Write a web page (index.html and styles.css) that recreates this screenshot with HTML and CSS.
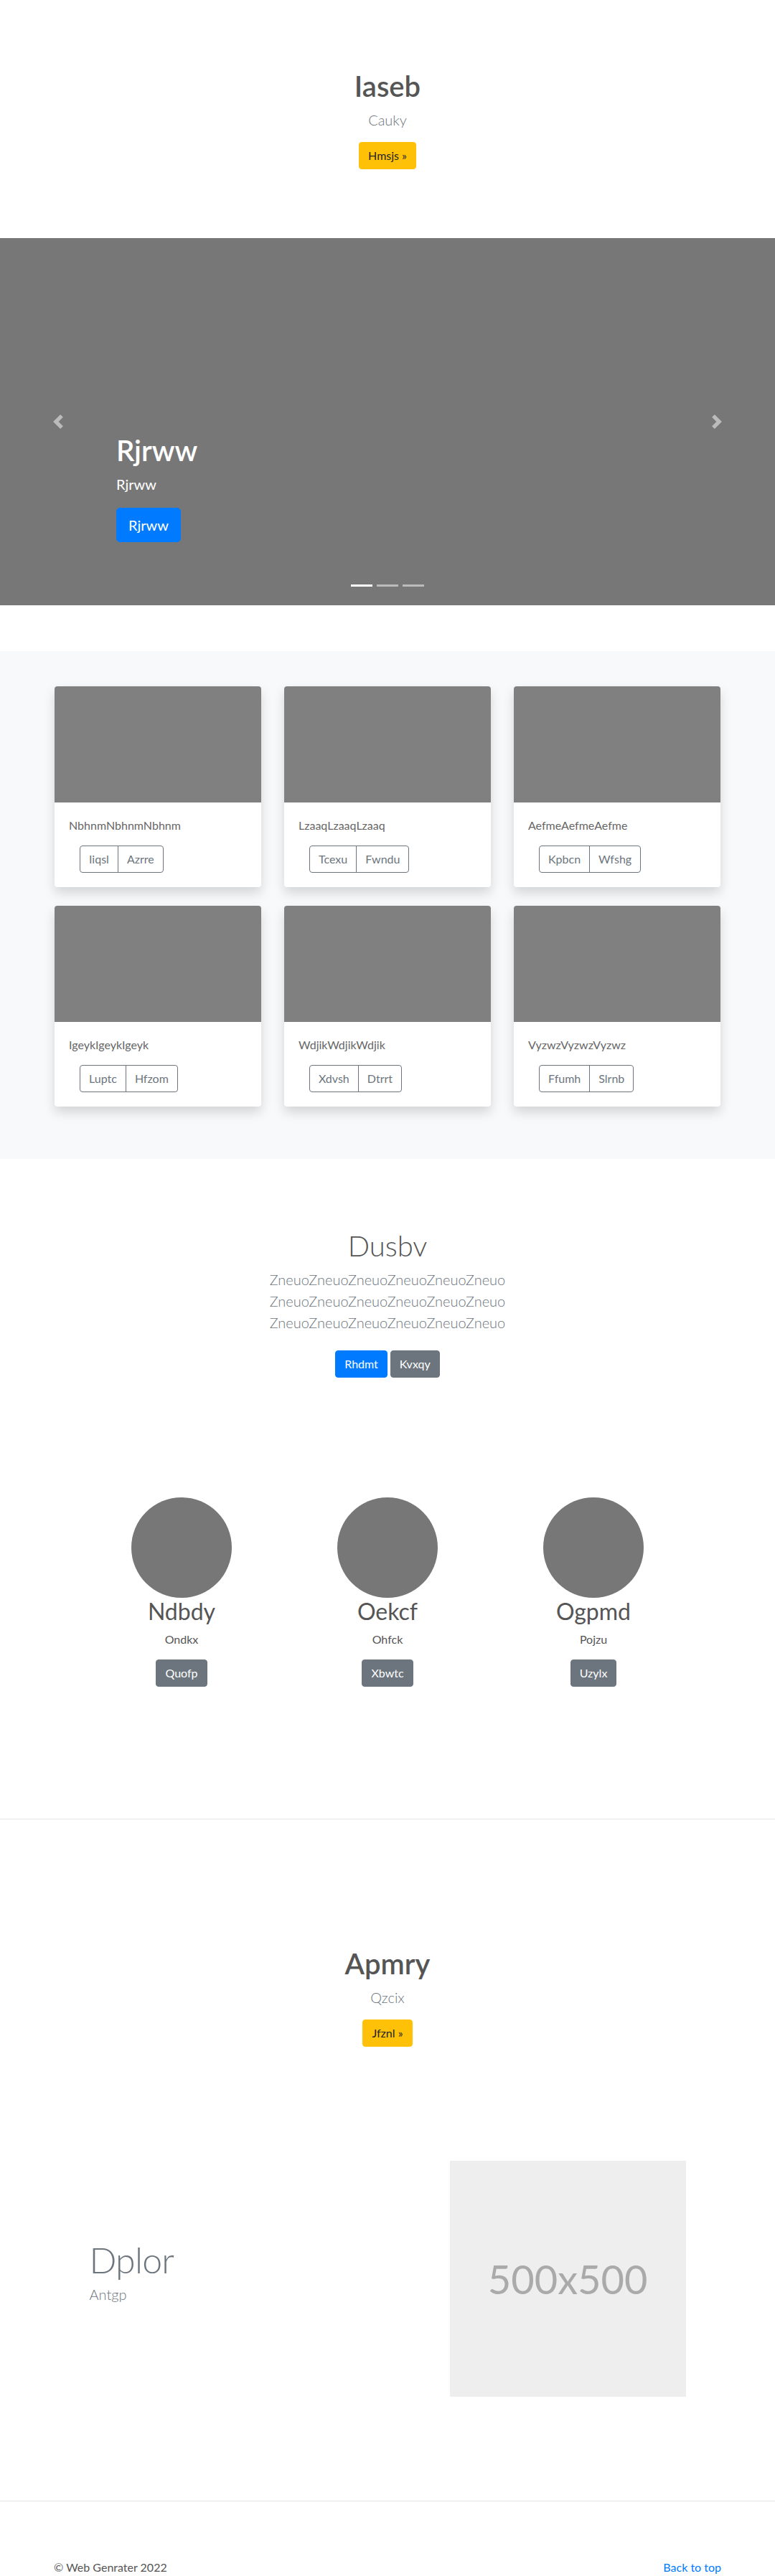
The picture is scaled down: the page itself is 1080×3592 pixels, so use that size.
FILE: index.html
```html
<!DOCTYPE html>
<html lang="en">
<head>
<meta charset="utf-8">
<title>Iaseb</title>
<link rel="stylesheet" href="styles.css">
</head>
<body>
<section class="hero">
  <h1 class="hero-title">Iaseb</h1>
  <p class="lead hero-lead">Cauky</p>
  <div class="btn-row"><a class="btn btn-warning" href="#">Hmsjs »</a></div>
</section>

<div class="carousel">
  <div class="caption">
    <h1 class="caption-title">Rjrww</h1>
    <p class="caption-text">Rjrww</p>
    <div><a class="btn btn-lg btn-primary" href="#">Rjrww</a></div>
  </div>
  <a class="ctrl ctrl-prev" href="#">
    <svg width="20" height="20" viewBox="0 0 8 8"><path fill="#fff" d="M5.25 0l-4 4 4 4 1.5-1.5L4.25 4l2.5-2.5L5.25 0z"/></svg>
  </a>
  <a class="ctrl ctrl-next" href="#">
    <svg width="20" height="20" viewBox="0 0 8 8"><path fill="#fff" d="M2.75 0l-1.5 1.5L3.75 4l-2.5 2.5L2.75 8l4-4-4-4z"/></svg>
  </a>
  <ol class="indicators"><li class="active"></li><li></li><li></li></ol>
</div>

<section class="album">
  <div class="card-grid">
    <div class="card"><div class="card-img"></div><div class="card-body"><p class="card-text">NbhnmNbhnmNbhnm</p><div class="btn-group"><a class="btn btn-outline" href="#">Iiqsl</a><a class="btn btn-outline" href="#">Azrre</a></div></div></div>
    <div class="card"><div class="card-img"></div><div class="card-body"><p class="card-text">LzaaqLzaaqLzaaq</p><div class="btn-group"><a class="btn btn-outline" href="#">Tcexu</a><a class="btn btn-outline" href="#">Fwndu</a></div></div></div>
    <div class="card"><div class="card-img"></div><div class="card-body"><p class="card-text">AefmeAefmeAefme</p><div class="btn-group"><a class="btn btn-outline" href="#">Kpbcn</a><a class="btn btn-outline" href="#">Wfshg</a></div></div></div>
    <div class="card"><div class="card-img"></div><div class="card-body"><p class="card-text">IgeykIgeykIgeyk</p><div class="btn-group"><a class="btn btn-outline" href="#">Luptc</a><a class="btn btn-outline" href="#">Hfzom</a></div></div></div>
    <div class="card"><div class="card-img"></div><div class="card-body"><p class="card-text">WdjikWdjikWdjik</p><div class="btn-group"><a class="btn btn-outline" href="#">Xdvsh</a><a class="btn btn-outline" href="#">Dtrrt</a></div></div></div>
    <div class="card"><div class="card-img"></div><div class="card-body"><p class="card-text">VyzwzVyzwzVyzwz</p><div class="btn-group"><a class="btn btn-outline" href="#">Ffumh</a><a class="btn btn-outline" href="#">Slrnb</a></div></div></div>
  </div>
</section>

<section class="intro">
  <h1 class="intro-title">Dusbv</h1>
  <p class="lead intro-lead">ZneuoZneuoZneuoZneuoZneuoZneuo ZneuoZneuoZneuoZneuoZneuoZneuo ZneuoZneuoZneuoZneuoZneuoZneuo</p>
  <div class="btn-row"><a class="btn btn-primary" href="#">Rhdmt</a><a class="btn btn-secondary" href="#">Kvxqy</a></div>
</section>

<section class="marketing">
  <div class="person">
    <div class="avatar"></div>
    <h2 class="person-name">Ndbdy</h2>
    <p class="person-role">Ondkx</p>
    <a class="btn btn-secondary" href="#">Quofp</a>
  </div>
  <div class="person">
    <div class="avatar"></div>
    <h2 class="person-name">Oekcf</h2>
    <p class="person-role">Ohfck</p>
    <a class="btn btn-secondary" href="#">Xbwtc</a>
  </div>
  <div class="person">
    <div class="avatar"></div>
    <h2 class="person-name">Ogpmd</h2>
    <p class="person-role">Pojzu</p>
    <a class="btn btn-secondary" href="#">Uzylx</a>
  </div>
</section>

<hr class="divider divider-top">

<section class="hero">
  <h1 class="hero-title">Apmry</h1>
  <p class="lead hero-lead">Qzcix</p>
  <div class="btn-row"><a class="btn btn-warning" href="#">Jfznl »</a></div>
</section>

<section class="featurette">
  <div class="feat-text">
    <h2 class="feat-title">Dplor</h2>
    <p class="lead feat-lead">Antgp</p>
  </div>
  <div class="feat-media">
    <div class="placeholder">500x500</div>
  </div>
</section>

<hr class="divider divider-foot">

<footer class="footer">
  <p>© Web Genrater 2022</p>
  <p><a class="link" href="#">Back to top</a></p>
</footer>
</body>
</html>
```

FILE: styles.css
```css
* { box-sizing: border-box; }

body {
  margin: 0;
  font-family: Lato, "Open Sans", "Liberation Sans", sans-serif;
  font-size: 16px;
  line-height: 1.5;
  color: #555;
  background: #fff;
}

h1, h2, p, ol { margin: 0; }
a { text-decoration: none; }

/* buttons */
.btn {
  display: inline-block;
  font-size: 16px;
  line-height: 24px;
  padding: 6px 12px;
  border: 1px solid transparent;
  border-radius: 4px;
  font-weight: 400;
  text-align: center;
  white-space: nowrap;
}
.btn-warning { background: #ffc107; border-color: #ffc107; color: #212529; }
.btn-primary { background: #007bff; border-color: #007bff; color: #fff; }
.btn-secondary { background: #6c757d; border-color: #6c757d; color: #fff; }
.btn-lg { font-size: 20px; line-height: 30px; padding: 8px 16px; border-radius: 5px; }
.btn-outline { border-color: #6c757d; color: #6c757d; background: transparent; }

.btn-row { display: flex; justify-content: center; gap: 4px; }

.lead { font-size: 20px; line-height: 30px; font-weight: 300; color: #6c757d; }

/* hero */
.hero { padding: 96px 0; text-align: center; }
.hero-title { font-size: 40px; line-height: 48px; font-weight: 600; color: #555; margin-bottom: 8px; }
.hero-lead { margin-bottom: 16px; }

/* carousel */
.carousel {
  position: relative;
  height: 512px;
  background: #777;
  margin-bottom: 64px;
  display: flex;
  flex-direction: column;
  justify-content: flex-end;
  padding: 0 162px 88px;
  color: #fff;
}
.caption { position: relative; z-index: 2; }
.caption-title { font-size: 40px; line-height: 48px; font-weight: 600; margin-bottom: 8px; }
.caption-text { font-size: 20px; line-height: 30px; margin-bottom: 18px; }

.ctrl {
  position: absolute;
  top: 0;
  bottom: 0;
  width: 162px;
  display: flex;
  align-items: center;
  justify-content: center;
  opacity: 0.5;
}
.ctrl svg { display: block; }
.ctrl-prev { left: 0; }
.ctrl-next { right: 0; }

.indicators {
  position: absolute;
  left: 0;
  right: 0;
  bottom: 26px;
  list-style: none;
  padding: 0;
  display: flex;
  justify-content: center;
  gap: 6px;
}
.indicators li { width: 30px; height: 3px; background: #fff; opacity: 0.5; }
.indicators li.active { opacity: 1; }

/* album */
.album { background: #f8f9fa; padding: 49px 0 73px; }
.card-grid {
  width: 928px;
  margin: 0 auto;
  display: grid;
  grid-template-columns: repeat(3, 288px);
  column-gap: 32px;
  row-gap: 26px;
}
.card {
  background: #fff;
  border-radius: 4px;
  overflow: hidden;
  box-shadow: 0 8px 16px rgba(0, 0, 0, 0.15);
}
.card-img { height: 162px; background: #808080; }
.card-body { padding: 20px; }
.card-text { margin-bottom: 16px; color: #666; }
.btn-group { display: inline-flex; margin-left: 15px; }
.btn-group .btn:first-child { border-top-right-radius: 0; border-bottom-right-radius: 0; }
.btn-group .btn + .btn { margin-left: -1px; border-top-left-radius: 0; border-bottom-left-radius: 0; }

/* intro */
.intro { padding-top: 97px; text-align: center; }
.intro-title { font-size: 40px; line-height: 48px; font-weight: 300; color: #555; margin-bottom: 8px; }
.intro-lead { width: 450px; margin: 0 auto 24px; }

/* marketing */
.marketing {
  width: 861px;
  margin: 0 auto;
  padding-top: 167px;
  display: grid;
  grid-template-columns: repeat(3, 1fr);
  text-align: center;
}
.avatar { width: 140px; height: 140px; border-radius: 50%; background: #777; margin: 0 auto; }
.person-name { font-size: 32px; line-height: 38.4px; font-weight: 400; color: #555; margin-bottom: 8px; }
.person-role { margin-bottom: 16px; color: #555; }

.divider { border: 0; height: 1px; background: #e6e6e6; margin: 0; }
.divider-top { margin-top: 184px; margin-bottom: 81px; }
.divider-foot { margin-top: 145px; margin-bottom: 80px; }

/* featurette */
.featurette {
  width: 861px;
  margin: 63px auto 0;
  display: flex;
  align-items: center;
}
.feat-text { flex: 0 0 502.25px; padding: 0 15px; }
.feat-media { flex: 0 0 358.75px; padding: 0 15px; }
.feat-title {
  font-size: 50px;
  line-height: 1;
  font-weight: 300;
  letter-spacing: -0.8px;
  color: #6c757d;
  margin-bottom: 8px;
}
.feat-lead { margin-bottom: 16px; }
.placeholder {
  width: 100%;
  aspect-ratio: 1 / 1;
  background: #eee;
  color: #aaa;
  font-size: 56px;
  display: flex;
  align-items: center;
  justify-content: center;
}

/* footer */
.footer {
  width: 930px;
  margin: 0 auto;
  display: flex;
  justify-content: space-between;
}
.link { color: #007bff; }
```
